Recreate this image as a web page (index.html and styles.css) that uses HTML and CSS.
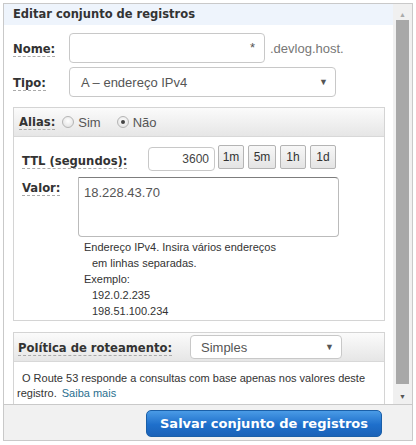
FILE: index.html
```html
<!DOCTYPE html>
<html lang="pt">
<head>
<meta charset="utf-8">
<link rel="stylesheet" href="styles.css">
</head>
<body>
<div class="frame">
  <div class="scroll">
    <div class="content">
      <div class="title">Editar conjunto de registros</div>
      <div class="row row-nome">
        <span class="label"><span class="lbl">Nome:</span></span>
        <div class="input name-input"><span class="star">*</span></div>
        <span class="suffix">.devlog.host.</span>
      </div>
      <div class="row row-tipo">
        <span class="label"><span class="lbl">Tipo:</span></span>
        <div class="select type-select"><span>A – endereço IPv4</span><span class="arrow">▼</span></div>
      </div>
      <div class="panel alias-panel">
        <div class="panel-head">
          <span class="lbl">Alias:</span>
          <span class="radio"></span><span class="rtext">Sim</span>
          <span class="radio checked"></span><span class="rtext">Não</span>
        </div>
        <div class="panel-body">
          <div class="ttl-row">
            <span class="ttl-label"><span class="lbl">TTL (segundos):</span></span>
            <div class="input ttl-input">3600</div>
            <div class="btns">
              <span class="btn">1m</span><span class="btn">5m</span><span class="btn">1h</span><span class="btn">1d</span>
            </div>
          </div>
          <div class="valor-row">
            <span class="valor-label"><span class="lbl">Valor:</span></span>
            <div class="textarea">18.228.43.70</div>
          </div>
          <div class="help">
            <div>Endereço IPv4. Insira vários endereços</div>
            <div class="ind">em linhas separadas.</div>
            <div>Exemplo:</div>
            <div class="ind">192.0.2.235</div>
            <div class="ind">198.51.100.234</div>
          </div>
        </div>
      </div>
      <div class="panel policy-panel">
        <div class="panel-head policy-head">
          <span class="policy-label"><span class="lbl">Política de roteamento:</span></span>
          <div class="select policy-select"><span>Simples</span><span class="arrow">▼</span></div>
        </div>
        <div class="policy-body">
          <div class="l1">O Route 53 responde a consultas com base apenas nos valores deste</div>
          <div class="l2"><span>registro.</span><a class="link" href="#">Saiba mais</a></div>
        </div>
      </div>
    </div>
    <div class="scrollbar">
      <span class="sarrow up">▲</span>
      <div class="thumb"></div>
      <span class="sarrow down">▼</span>
    </div>
  </div>
  <div class="footer">
    <button class="save">Salvar conjunto de registros</button>
  </div>
</div>
</body>
</html>
```
FILE: styles.css
```css
* { box-sizing: border-box; }
html, body { margin: 0; padding: 0; background: #fff; }
body { font-family: "Liberation Sans", Arial, sans-serif; color: #333; }

.frame {
  margin: 3px 0 0 3px;
  width: 410px;
  height: 438px;
  border: 1px solid #c9c9c9;
  display: flex;
  flex-direction: column;
}
.scroll {
  height: 400px;
  display: flex;
  overflow: hidden;
}
.content {
  width: 389px;
  overflow: hidden;
}
.title {
  height: 21px;
  background: #eef4fc;
  padding-left: 9px;
  font: bold 11.5px "DejaVu Sans", Verdana, sans-serif;
  line-height: 21px;
  color: #333;
}
.lbl {
  font: bold 11.6px "DejaVu Sans", Verdana, sans-serif;
  color: #333;
  border-bottom: 1px dashed #aaa;
  line-height: 14px;
}
.row {
  display: flex;
  align-items: center;
  padding-left: 9px;
}
.row-nome { margin-top: 8px; height: 30px; }
.row-tipo { margin-top: 4px; height: 30px; }
.label { width: 56px; flex: none; }
.input {
  border: 1px solid #c8c8c8;
  border-radius: 4px;
  background: #fff;
}
.name-input {
  width: 196px;
  height: 30px;
  position: relative;
}
.star {
  position: absolute;
  right: 9px;
  top: 6px;
  font-size: 13px;
  color: #555;
}
.suffix {
  margin-left: 5px;
  font-size: 13px;
  color: #777;
}
.select {
  border: 1px solid #c8c8c8;
  border-radius: 4px;
  background: #fff;
  display: flex;
  align-items: center;
  justify-content: space-between;
  font-size: 13px;
  color: #555;
}
.type-select {
  width: 267px;
  height: 30px;
  padding: 0 7px 0 11px;
}
.arrow { font-size: 9px; color: #555; }

.panel {
  margin-left: 9px;
  width: 372px;
  border: 1px solid #d4d4d4;
}
.alias-panel { margin-top: 10px; height: 214px; }
.panel-head {
  height: 29px;
  background: linear-gradient(#fbfbfb, #e6e6e6);
  border-bottom: 1px solid #d8d8d8;
  display: flex;
  align-items: center;
  padding-left: 5px;
}
.radio {
  width: 12px;
  height: 12px;
  border-radius: 50%;
  border: 1px solid #b5b5b5;
  background: radial-gradient(circle at 50% 40%, #fff, #dcdcdc);
  margin-left: 7px;
  position: relative;
}
.radio.checked::after {
  content: "";
  position: absolute;
  left: 3px; top: 3px;
  width: 4px; height: 4px;
  border-radius: 50%;
  background: #444;
}
.rtext { margin-left: 4px; font-size: 13px; color: #555; margin-right: 9px; }

.panel-body { padding: 8px 0 0 8px; }
.ttl-row { display: flex; align-items: flex-start; height: 30px; }
.ttl-label { margin-top: 6px; width: 126px; flex: none; }
.ttl-input {
  margin-top: 2px;
  width: 67px;
  height: 24px;
  text-align: right;
  font-size: 12px;
  color: #444;
  padding: 4px 5px 0 0;
}
.btns { display: flex; gap: 4px; margin-left: 3px; }
.btn {
  width: 26px;
  height: 24px;
  border: 1px solid #b4b4b4;
  border-radius: 2px;
  background: linear-gradient(#f7f7f7, #e4e4e4);
  font-size: 12px;
  color: #333;
  display: flex;
  align-items: center;
  justify-content: center;
}
.btn:nth-child(2) { width: 28px; }
.valor-row { display: flex; margin-top: 2px; }
.valor-label { margin-top: 1px; width: 56px; flex: none; }
.textarea {
  width: 261px;
  height: 60px;
  border: 1px solid #bbb;
  border-top-color: #7d7d7d;
  border-radius: 0 4px 4px 4px;
  font-size: 13px;
  color: #555;
  padding: 7px 0 0 5px;
}
.help {
  margin: 2px 0 0 62px;
  font-size: 11px;
  line-height: 16px;
  color: #333;
}
.help .ind { padding-left: 8px; }

.policy-panel { margin-top: 11px; height: 80px; }
.policy-head { padding-left: 4px; }
.policy-label { width: 172px; flex: none; }
.policy-select {
  width: 152px;
  height: 24px;
  padding: 0 7px 0 10px;
}
.policy-body {
  padding: 9px 0 0 3px;
  font-size: 11px;
  line-height: 15px;
  color: #333;
}
.l1 { padding-left: 5px; }
.l2 { display: flex; gap: 5px; }
.link { color: #2a6f8f; text-decoration: none; }

.scrollbar {
  width: 19px;
  background: #f0f0f0;
  display: flex;
  flex-direction: column;
  align-items: center;
}
.sarrow { font-size: 7px; color: #999; line-height: 10px; }
.up { margin-top: 6px; color: #aaa; }
.down { margin-top: 8px; color: #555; }
.thumb {
  width: 13px;
  height: 364px;
  background: #a8a8a8;
}
.footer {
  flex: 1;
  background: #f1f1f1;
  border-top: 1px solid #c9c9c9;
  display: flex;
  align-items: center;
  justify-content: flex-end;
  padding-right: 30px;
}
.save {
  width: 236px;
  height: 27px;
  border: 1px solid #1a5fa8;
  border-radius: 5px;
  background: linear-gradient(#4a9be6, #1e6fcb 55%, #1a62b8);
  color: #fff;
  font: bold 13px "DejaVu Sans", Verdana, sans-serif;
  margin-top: 2px;
}
```
